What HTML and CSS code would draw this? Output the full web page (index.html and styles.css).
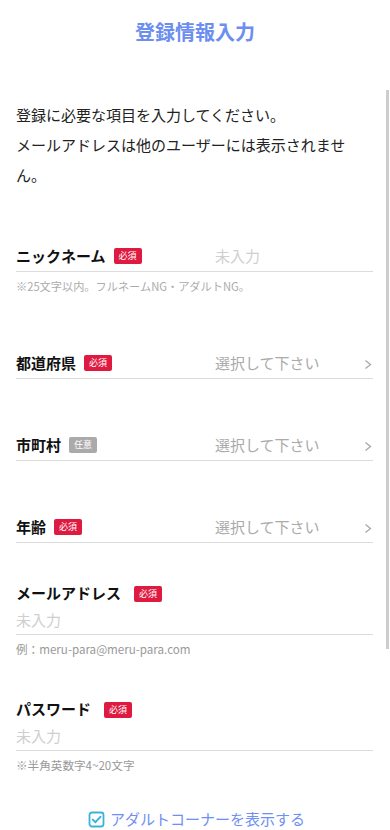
FILE: index.html
```html
<!DOCTYPE html>
<html lang="ja">
<head>
    <meta charset="UTF-8">
    <meta name="viewport" content="width=device-width, initial-scale=1.0">
    <title>登録情報入力</title>
    <link rel="stylesheet" href="styles.css">
</head>
<body>
    <div class="header">
        <h1 class="page-title">登録情報入力</h1>
    </div>

    <div class="scroll-bar"></div>

    <div class="content">
        <p class="intro">登録に必要な項目を入力してください。<br>メールアドレスは他のユーザーには表示されません。</p>

        <div class="field field-first">
            <div class="row">
                <div class="label">ニックネーム<span class="badge">必須</span></div>
                <div class="value placeholder">未入力</div>
            </div>
            <p class="note">※25文字以内。フルネームNG・アダルトNG。</p>
        </div>

        <div class="field field-select field-pref">
            <div class="row">
                <div class="label">都道府県<span class="badge">必須</span></div>
                <div class="value">選択して下さい</div>
                <svg class="chevron" width="8" height="11" viewBox="0 0 8 11"><polyline points="1.5,1.5 6.5,5.5 1.5,9.5" fill="none" stroke="#a8a8a8" stroke-width="1.3"/></svg>
            </div>
        </div>

        <div class="field field-select">
            <div class="row">
                <div class="label">市町村<span class="badge badge-optional">任意</span></div>
                <div class="value">選択して下さい</div>
                <svg class="chevron" width="8" height="11" viewBox="0 0 8 11"><polyline points="1.5,1.5 6.5,5.5 1.5,9.5" fill="none" stroke="#a8a8a8" stroke-width="1.3"/></svg>
            </div>
        </div>

        <div class="field field-select">
            <div class="row">
                <div class="label">年齢<span class="badge">必須</span></div>
                <div class="value">選択して下さい</div>
                <svg class="chevron" width="8" height="11" viewBox="0 0 8 11"><polyline points="1.5,1.5 6.5,5.5 1.5,9.5" fill="none" stroke="#a8a8a8" stroke-width="1.3"/></svg>
            </div>
        </div>

        <div class="field field-stacked field-mail">
            <div class="stacked-label">メールアドレス<span class="badge">必須</span></div>
            <div class="stacked-input placeholder">未入力</div>
            <p class="note note-dark">例：meru-para@meru-para.com</p>
        </div>

        <div class="field field-stacked field-pass">
            <div class="stacked-label">パスワード<span class="badge">必須</span></div>
            <div class="stacked-input placeholder">未入力</div>
            <p class="note note-dark">※半角英数字4~20文字</p>
        </div>

        <label class="check-row">
            <svg class="check-icon" width="17" height="17" viewBox="0 0 17 17">
                <rect x="1.5" y="1.5" width="14" height="14" rx="2.5" fill="none" stroke="#3cb2da" stroke-width="1.8"/>
                <polyline points="4.8,8.6 7.5,11.2 12.4,5.8" fill="none" stroke="#3cb2da" stroke-width="2" stroke-linecap="round" stroke-linejoin="round"/>
            </svg>
            <span>アダルトコーナーを表示する</span>
        </label>
    </div>
</body>
</html>
```

FILE: styles.css
```css
body {
    font-family: "Noto Sans CJK JP", "Noto Sans", sans-serif;
    margin: 0;
    padding: 0;
    background-color: #fff;
    color: #111;
    position: relative;
    overflow: hidden;
}

.header {
    height: 64px;
    display: flex;
    align-items: center;
    justify-content: center;
}

.page-title {
    margin: 0;
    font-size: 20px;
    font-weight: bold;
    color: #6b8ef0;
    line-height: 1;
}

.scroll-bar {
    position: absolute;
    top: 90px;
    right: 1px;
    width: 3px;
    height: 559px;
    background-color: #cdcdcd;
}

.content {
    padding: 0 17px 0 16px;
}

.intro {
    margin: 36px 0 0;
    padding-right: 20px;
    font-size: 15px;
    line-height: 30px;
    color: #222;
}

.field-first {
    margin-top: 50px;
}

.field-pref {
    margin-top: 53px !important;
}

.field-select {
    margin-top: 50px;
}

.row {
    height: 31px;
    display: flex;
    align-items: center;
    border-bottom: 1px solid #dcdcdc;
}

.label {
    width: 199px;
    flex-shrink: 0;
    display: flex;
    align-items: center;
    font-size: 15px;
    font-weight: bold;
    color: #111;
}

.badge {
    display: inline-flex;
    align-items: center;
    justify-content: center;
    width: 28px;
    height: 16px;
    margin-left: 8px;
    border-radius: 2px;
    background-color: #de1a40;
    color: #fff;
    font-size: 9px;
    font-weight: normal;
    line-height: 1;
}

.badge-optional {
    background-color: #aaa;
}

.value {
    flex: 1;
    font-size: 15px;
    color: #aaa;
}

.placeholder {
    color: #cfcfcf;
}

.chevron {
    margin-right: 1px;
    margin-top: 3px;
}

.note {
    margin: 6px 0 0;
    font-size: 11.2px;
    line-height: 16px;
    color: #acacac;
}

.note-dark {
    font-size: 11.6px;
    color: #999;
}

.field-mail {
    margin-top: 37px;
}

.field-pass {
    margin-top: 39px;
}

.stacked-label {
    display: flex;
    align-items: center;
    height: 24px;
    font-size: 15px;
    font-weight: bold;
}

.stacked-label .badge {
    margin-left: 13px;
    margin-top: 3px;
}

.stacked-input {
    height: 30px;
    display: flex;
    align-items: center;
    font-size: 15px;
    border-bottom: 1px solid #dcdcdc;
}

.check-row {
    margin-top: 34px;
    height: 24px;
    display: flex;
    align-items: center;
    justify-content: center;
    gap: 5px;
    font-size: 15px;
    line-height: 20px;
    color: #6f8ff3;
    padding-left: 4px;
}
```
